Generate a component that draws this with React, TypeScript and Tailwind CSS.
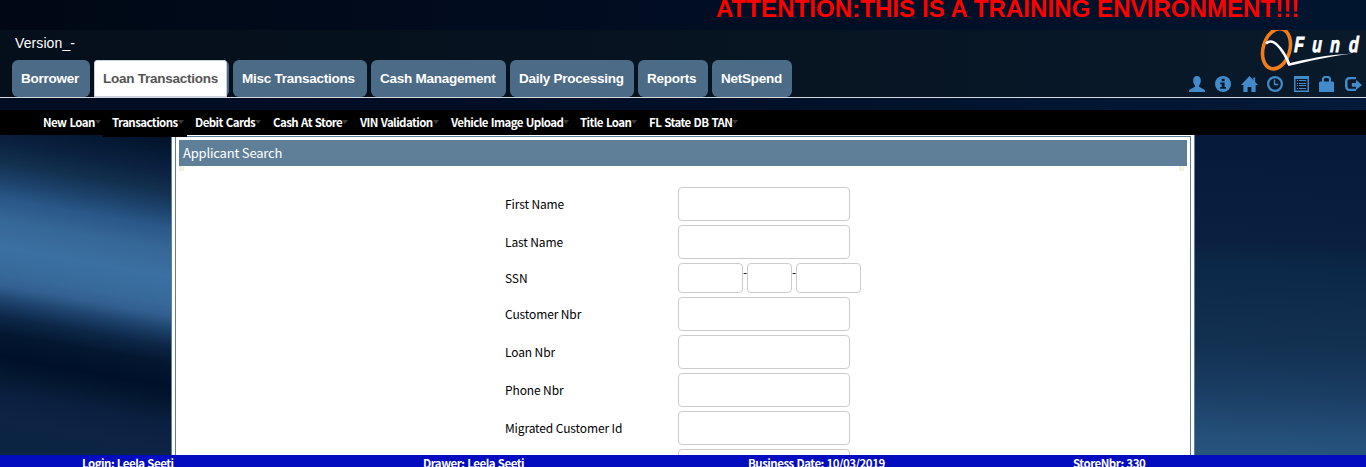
import React from "react";

const tabs = [
  { label: "Borrower", width: "w-[78px]" },
  { label: "Loan Transactions", width: "w-[135px]", active: true },
  { label: "Misc Transactions", width: "w-[134px]" },
  { label: "Cash Management", width: "w-[135px]" },
  { label: "Daily Processing", width: "w-[124px]" },
  { label: "Reports", width: "w-[70px]" },
  { label: "NetSpend", width: "w-[80px]" },
];

const menu = [
  { label: "New Loan", width: "w-[69px]" },
  { label: "Transactions", width: "w-[83px]", active: true },
  { label: "Debit Cards", width: "w-[78px]" },
  { label: "Cash At Store", width: "w-[87px]" },
  { label: "VIN Validation", width: "w-[91px]" },
  { label: "Vehicle Image Upload", width: "w-[129px]" },
  { label: "Title Loan", width: "w-[69px]" },
  { label: "FL State DB TAN", width: "w-[100px]" },
];

const status = [
  { label: "Login: Leela Seeti", width: "w-[341px]" },
  { label: "Drawer: Leela Seeti", width: "w-[325px]" },
  { label: "Business Date: 10/03/2019", width: "w-[325px]" },
  { label: "StoreNbr: 330", width: "w-[200px]" },
];

function Logo() {
  return (
    <svg width="106" height="42" viewBox="0 0 106 42" className="block">
      <ellipse cx="16.500" cy="18.800" rx="13.300" ry="20.500" transform="rotate(16 16.5 18.8)" fill="none" stroke="#f07d17" strokeWidth="3.6" />
      <path d="M6 13.500 C11 9 16 13 20 18 C24 23 27 28 29 34" fill="none" stroke="#fff" strokeWidth="2.6" />
      <path d="M27 33 L28.500 36 C50 31 65 27 93 23.500 C65 25 48 29 30 33 Z" fill="#fff" />
      <text
        transform="translate(34 22) skewX(-2) scale(0.72 1)"
        fontFamily="Liberation Sans, Arial, sans-serif"
        fontWeight="700"
        fontStyle="italic"
        fontSize="22"
        fill="#fff"
        stroke="#fff"
        strokeWidth="0.9"
      >
        <tspan x="0">F</tspan>
        <tspan x="25">u</tspan>
        <tspan x="50">n</tspan>
        <tspan x="76">d</tspan>
      </text>
    </svg>
  );
}

function Icons() {
  return (
    <div className="flex h-4 items-start text-[#428bca]">
      <svg width="16" height="16" viewBox="0 0 16 16" fill="currentColor" className="mr-[10px]">
        <path d="M8 0C5.5 0 4.2 1.8 4.2 4.4c0 2.4.8 3.9 1.8 5v1.4L1.7 13C.7 13.5 0 14 0 15v1h16v-1c0-1-.7-1.500-1.700-2L10 10.800V9.400c1-1.100 1.800-2.600 1.800-5C11.800 1.800 10.500 0 8 0Z" />
      </svg>
      <svg width="16" height="16" viewBox="0 0 16 16" fill="currentColor" className="mr-[10px]">
        <circle cx="8" cy="8" r="8" />
        <path d="M6.600 2.800h3v2.400h-3zM5.200 6.400h4.400v4.600h1.400v1.800H5.200V11h1.500V8.200H5.200z" fill="#0a1929" />
      </svg>
      <svg width="17" height="16" viewBox="0 0 18 16" preserveAspectRatio="none" fill="currentColor" className="mr-[9px]">
        <path d="M9 0 0 9h2.500v7H7v-5h4v5h4.500V9H18l-3-3V1.500h-2V4Z" />
      </svg>
      <svg width="16" height="16" viewBox="0 0 16 16" fill="none" stroke="currentColor" className="mr-[11px]">
        <circle cx="8" cy="8" r="6.900" strokeWidth="2.200" />
        <path d="M7.500 3.500v5h3.800" strokeWidth="1.300" />
      </svg>
      <svg width="15" height="16" viewBox="0 0 15 16" fill="currentColor" className="mr-[10px]">
        <path fillRule="evenodd" d="M0 0h15v16H0zM1.500 3v11.500h12V3z" />
        <path d="M3 4h1v1H3zm2 0h7v1H5zM3 7h1v1H3zm2 0h7v1H5zM3 9h1v1H3zm2 0h7v1H5zM3 12h1v1H3zm2 0h7v1H5z" />
      </svg>
      <svg width="15" height="16" viewBox="0 0 15 16" fill="currentColor" className="mr-[11px]">
        <path fillRule="evenodd" d="M3 5.500V2l2-2h5l2 2v3.500h2l1 1V16H0V6.500l1-1zM5 5.500h5V3L9 2H6L5 3z" />
      </svg>
      <svg width="17" height="16" viewBox="0 0 17 16" fill="currentColor">
        <path d="M11 1H4.500C1.800 1 0 2.800 0 5.500v5C0 13.200 1.800 15 4.500 15H11v-2.200H5C3.400 12.800 2.500 12 2.500 10.500v-5C2.500 4 3.400 3.200 5 3.200h6z" />
        <path d="M11 3.800 17 9l-6 5v-3.200H6.800V7H11z" />
      </svg>
    </div>
  );
}

function Field({ label }: { label: string }) {
  return (
    <div className="flex h-[34px] shrink-0 items-center">
      <label className="w-[173px] pb-px">{label}</label>
      <input className="h-[34px] w-[172px] rounded-[4px] border border-[#ccc] bg-white" />
    </div>
  );
}

export default function App() {
  return (
    <div className="flex h-[467px] w-[1366px] flex-col overflow-hidden bg-[#010e24] font-['Liberation_Sans',Arial,sans-serif]">
      <div className="h-[30px] shrink-0 bg-[linear-gradient(90deg,#000814,#010d22_50%,#02152f)]">
        <div className="ml-[716px] mt-[-6px] whitespace-nowrap text-[24px] font-bold leading-[30px] tracking-[0.07px] text-[#ff0000]">
          ATTENTION:THIS IS A TRAINING ENVIRONMENT!!!
        </div>
      </div>

      <header className="flex h-[68px] shrink-0 justify-between border-b border-[#d5dae0] bg-[linear-gradient(90deg,#050f1b,#06121f_40%,#091a2b)]">
        <div className="flex flex-col pl-3">
          <div className="h-[30px] pl-[3px] text-[14px] leading-[27px] tracking-[0.1px] text-white">Version_-</div>
          <nav className="flex gap-1 text-[13.5px] font-bold tracking-[-0.25px]">
            {tabs.map((t) => (
              <div key={t.label} className={`${t.width} h-[37px] rounded-[6px] bg-[#4c6b86]`}>
                <div
                  className={
                    t.active
                      ? "h-[37px] w-[133px] whitespace-nowrap rounded-[3px] rounded-b-none border border-[#ccd2dc] bg-white pl-2 leading-[35px] text-[#555]"
                      : "h-[37px] whitespace-nowrap pl-[9px] leading-[37px] text-white"
                  }
                >
                  {t.label}
                </div>
              </div>
            ))}
          </nav>
        </div>
        <div className="flex flex-col items-end">
          <Logo />
          <div className="mr-[4px] mt-[4px]">
            <Icons />
          </div>
        </div>
      </header>

      <div className="h-[12px] shrink-0 bg-[linear-gradient(90deg,#010d22,#010f28_50%,#041a38)]" />

      <nav className="relative z-10 flex h-[25px] shrink-0 bg-black pl-[43px] font-['Noto_Sans_CJK_SC',sans-serif] text-[11.5px] font-bold tracking-[-0.57px] [word-spacing:0.9px] text-white">
        {menu.map((m) => (
          <div key={m.label} className={`${m.width} shrink-0`}>
            <div className={m.active ? "-ml-[9px] h-[27px] w-[84px] bg-black pl-[9px]" : "h-[25px]"}>
              <div className="flex h-[26px] items-center whitespace-nowrap">
                {m.label}
                <svg width="6" height="4" viewBox="0 0 6 4" className="mb-[2px]">
                  <path d="M0 0h6L3 4Z" fill="#3a3a3a" />
                </svg>
              </div>
            </div>
          </div>
        ))}
      </nav>

      <main className="flex h-[320px] shrink-0 font-['Noto_Sans_CJK_SC',sans-serif]">
        <div className="w-[171px] bg-[linear-gradient(190deg,#001024_0px,#041a34_18px,#0b2140_36px,#12304e_56px,#1c426b_74px,#2a5888_92px,#366898_115px,#3b70a2_140px,#376a9b_165px,#325f90_178px,#1c416a_193px,#0d2748_208px,#041730_225px,#00102a_248px,#041830_265px,#0b2040_285px,#0d2444_310px,#0b2542_345px)]" />
        <div className="flex w-[1024px] border-x border-[#5f7f99] bg-white px-[3px] pt-px">
          <div className="w-[1016px] border-x border-t border-[#5f7f99] px-[3px] pt-[3px]">
            <div className="w-[1008px]">
              <h1 className="h-[26px] bg-[#5f7f98] pl-1 text-[13px] font-normal leading-[26px] tracking-[-0.2px] text-white">Applicant Search</h1>
              <div className="flex h-[21px] justify-between pr-[3px]">
                <i className="h-[5px] w-[5px] bg-[#f1f3e2]" />
                <i className="h-[5px] w-[5px] bg-[#f1f3e2]" />
              </div>
              <form className="flex h-[268px] flex-col gap-1 overflow-hidden pl-[326px] text-[12px] tracking-[-0.12px] text-black">
                <Field label="First Name" />
                <Field label="Last Name" />
                <div className="flex h-[30px] shrink-0 items-center leading-[18px]">
                  <label className="w-[173px] pb-px">SSN</label>
                  <input className="h-[30px] w-[65px] rounded-[4px] border border-[#ccc] bg-white" />
                  <span className="mb-[12px] w-1">-</span>
                  <input className="h-[30px] w-[45px] rounded-[4px] border border-[#ccc] bg-white" />
                  <span className="mb-[12px] w-1">-</span>
                  <input className="h-[30px] w-[65px] rounded-[4px] border border-[#ccc] bg-white" />
                </div>
                <Field label="Customer Nbr" />
                <Field label="Loan Nbr" />
                <Field label="Phone Nbr" />
                <Field label="Migrated Customer Id" />
                <Field label="" />
              </form>
            </div>
          </div>
        </div>
        <div className="w-[171px] bg-[linear-gradient(182deg,#05193a,#0b2040_34%,#0b2848_42%,#123050_65%,#1a3d63_80%,#25507a_94%,#28537b)]" />
      </main>

      <footer className="flex h-[12px] shrink-0 overflow-hidden bg-[#040cc0] pl-[82px] font-['Noto_Sans_CJK_SC',sans-serif] text-[11.5px] font-bold leading-[17px] tracking-[-0.5px] [word-spacing:0.6px] text-white">
        {status.map((s) => (
          <div key={s.label} className={`${s.width} shrink-0 whitespace-nowrap`}>
            {s.label}
          </div>
        ))}
      </footer>
    </div>
  );
}
